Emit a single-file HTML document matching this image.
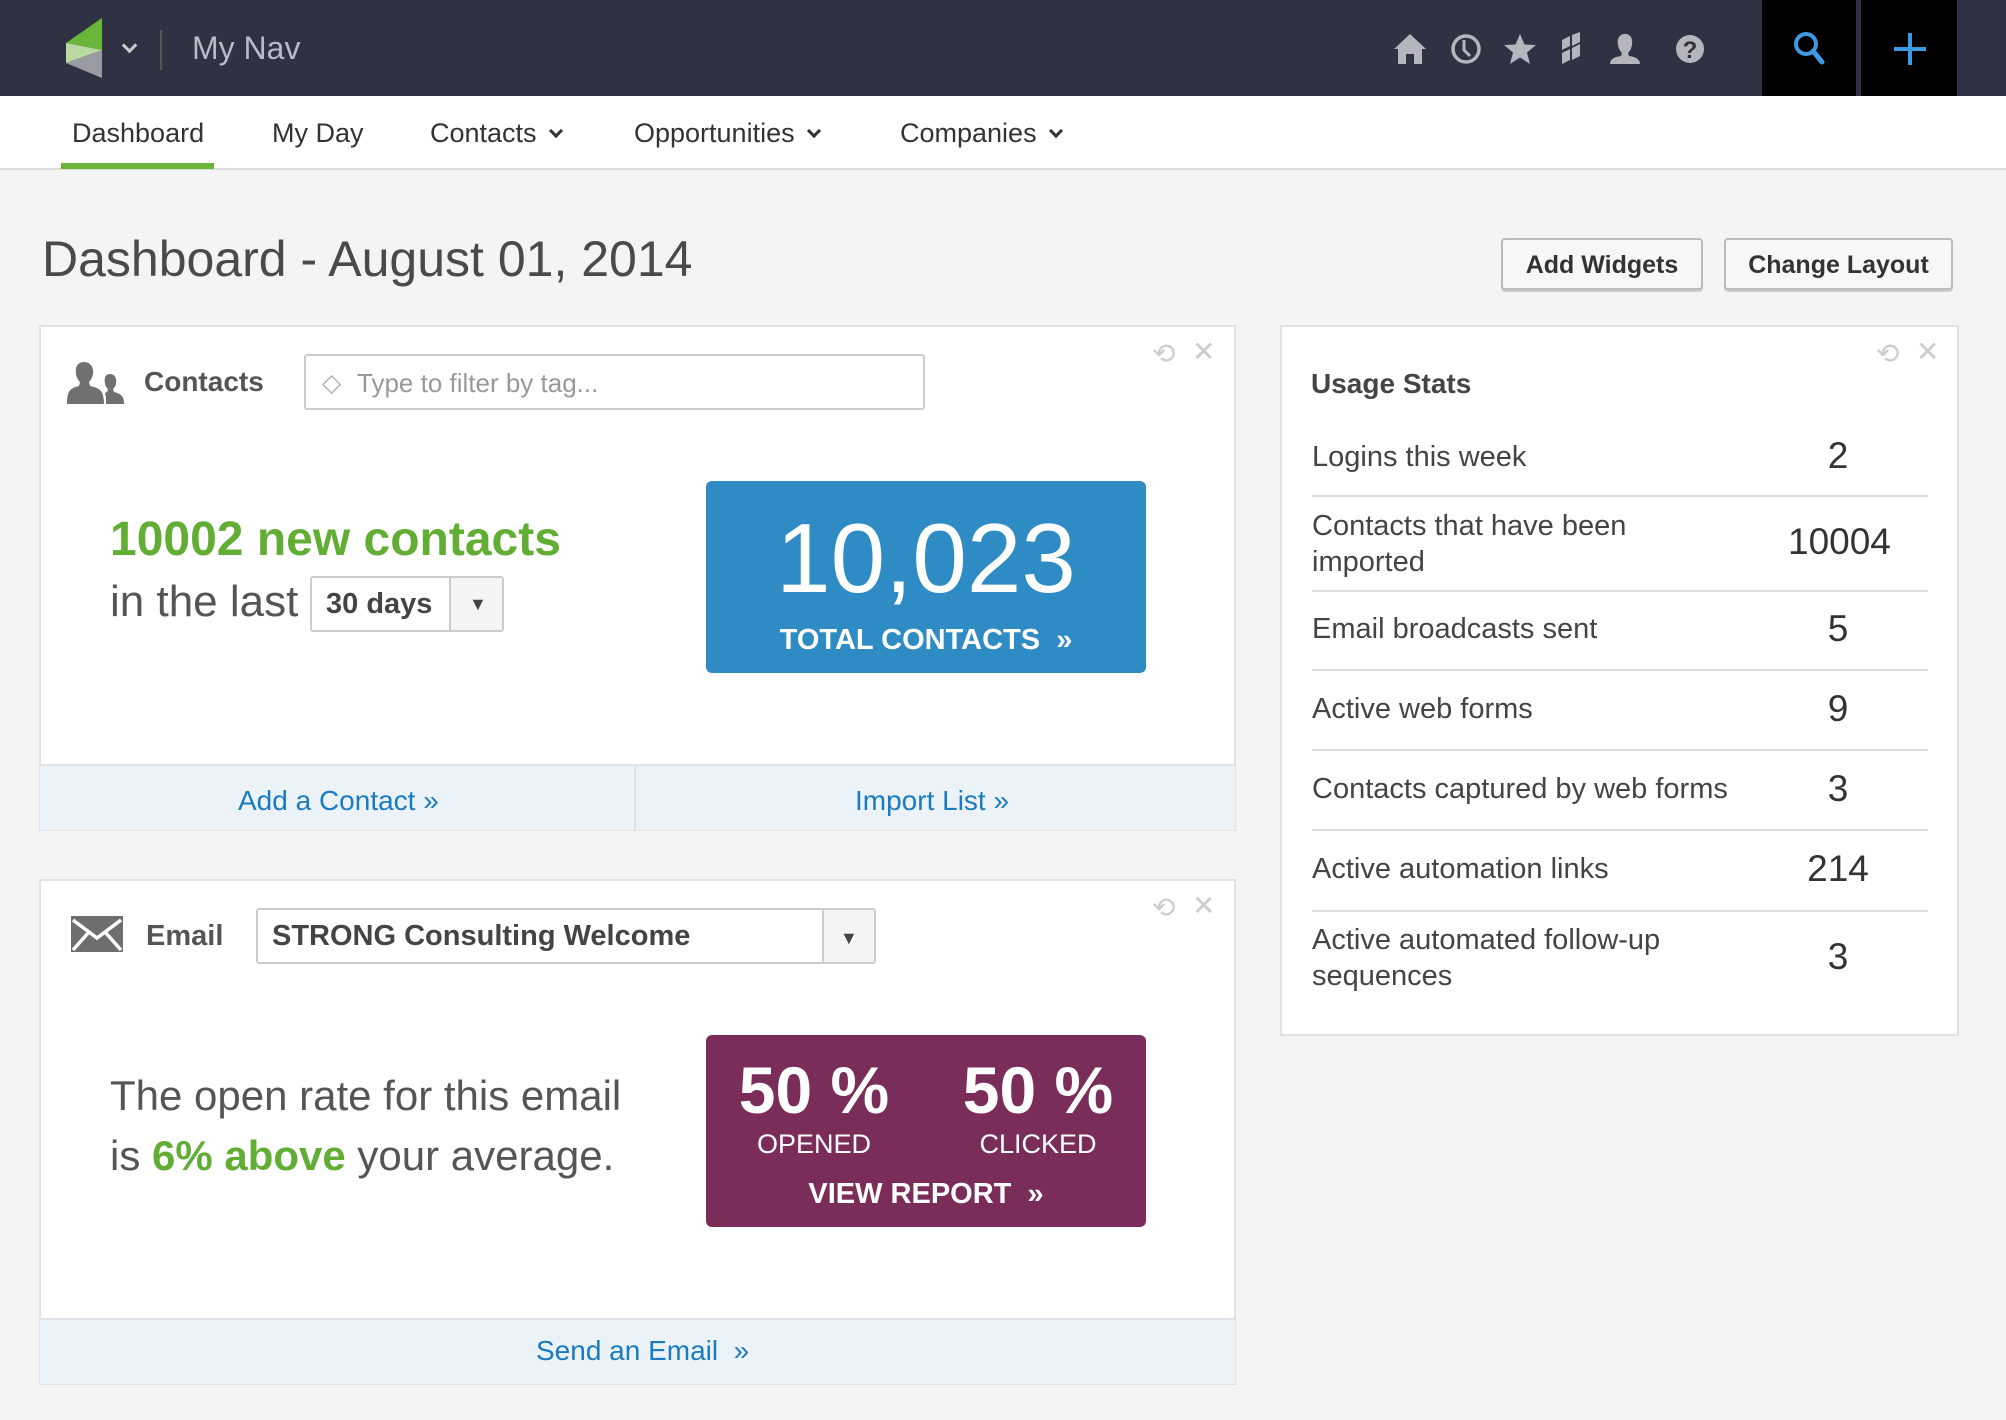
<!DOCTYPE html>
<html><head><meta charset="utf-8"><style>
*{margin:0;padding:0;box-sizing:border-box}
body{width:2006px;height:1420px;background:#f4f4f4;font-family:"Liberation Sans",sans-serif;color:#444;position:relative;overflow:hidden}
.a{position:absolute}
.top{left:0;top:0;width:2006px;height:96px;background:#2f3242}
.nav{left:0;top:96px;width:2006px;height:74px;background:#fff;border-bottom:2px solid #ddd}
.nv{top:116px;font-size:27px;color:#333;white-space:nowrap}
.chev{display:inline-block;width:10px;height:10px;border-right:3px solid #333;border-bottom:3px solid #333;transform:rotate(45deg);margin-left:14px;position:relative;top:-6px}
.panel{background:#fff;border:2px solid #e2e2e2}
.foot{background:#ebf2f8;border-top:2px solid #dde3e8}
.lnk{color:#1a7bc0;font-size:28px;white-space:nowrap}
.btn{background:#f7f7f7;border:2px solid #bbb;border-radius:4px;font-weight:bold;font-size:25px;color:#333;text-align:center;line-height:50px;box-shadow:0 2px 0 #ccc}
.row{left:1312px;width:616px;border-bottom:2px solid #ddd}
.lbl{font-size:29px;color:#444;line-height:36px;white-space:nowrap}
.val{font-size:37px;color:#333;width:100px;text-align:center;left:1788px}
.ico{color:#ccc;font-size:28px}
</style></head><body>
<div class="a top"></div>
<svg class="a" style="left:66px;top:18px" width="38" height="60" viewBox="0 0 38 60"><polygon points="0,25 36,0 36,32" fill="#6ab63a"/><polygon points="0,25 36,32 0,45" fill="#b9d9a0"/><polygon points="0,45 36,32 36,60" fill="#9a9ba2"/></svg>
<div class="a" style="left:124px;top:40px;width:11px;height:11px;border-right:3px solid #ccc;border-bottom:3px solid #ccc;transform:rotate(45deg)"></div>
<div class="a" style="left:160px;top:30px;width:2px;height:40px;background:#555"></div>
<div class="a" style="left:192px;top:30px;font-size:32px;color:#b8bac4">My Nav</div>
<svg class="a" style="left:1392px;top:32px" width="320" height="34" viewBox="0 0 320 34" fill="#b5b6bd">
<path d="M2 17 L18 2 L34 17 L30 17 L30 32 L22 32 L22 22 L14 22 L14 32 L6 32 L6 17Z"/>
<circle cx="74" cy="17" r="13" fill="none" stroke="#b5b6bd" stroke-width="3.5"/><path d="M72 8 L72 18 L78 24" fill="none" stroke="#b5b6bd" stroke-width="3"/>
<polygon points="128,2 132.5,12.5 144,13 135,20.5 138,32 128,25.5 118,32 121,20.5 112,13 123.5,12.5"/>
<path d="M170 8 L178 4 L178 14 L170 18Z M180 3 L188 0 L188 10 L180 14Z M170 21 L178 17 L178 28 L170 32Z M180 16 L188 12 L188 24 L180 28Z"/>
<path d="M233 2 C227 2 225 7 226 13 C227 18 229 20 230 21 L229 24 C221 25 218 28 218 32 L248 32 C248 28 245 25 237 24 L236 21 C237 20 239 18 240 13 C241 7 239 2 233 2Z"/>
<circle cx="298" cy="17" r="14"/><text x="298" y="26" font-size="24" font-weight="bold" text-anchor="middle" fill="#2f3242" font-family="Liberation Sans">?</text>
</svg>
<div class="a" style="left:1762px;top:0;width:94px;height:96px;background:#000"></div>
<div class="a" style="left:1861px;top:0;width:96px;height:96px;background:#000"></div>
<svg class="a" style="left:1792px;top:30px" width="34" height="36"><circle cx="14" cy="14" r="10" fill="none" stroke="#3d9ae0" stroke-width="4"/><line x1="21" y1="21" x2="30" y2="32" stroke="#3d9ae0" stroke-width="5" stroke-linecap="round"/></svg>
<svg class="a" style="left:1893px;top:32px" width="34" height="34"><rect x="15" y="1" width="4" height="32" fill="#3d9ae0"/><rect x="1" y="15" width="32" height="4" fill="#3d9ae0"/></svg>
<div class="a nav"></div>
<div class="a nv" style="left:72px;top:118px">Dashboard</div>
<div class="a" style="left:61px;top:163px;width:153px;height:6px;background:#6ab63a"></div>
<div class="a nv" style="left:272px;top:118px">My Day</div>
<div class="a nv" style="left:430px;top:118px">Contacts<span class="chev"></span></div>
<div class="a nv" style="left:634px;top:118px">Opportunities<span class="chev"></span></div>
<div class="a nv" style="left:900px;top:118px">Companies<span class="chev"></span></div>
<div class="a" style="left:42px;top:230px;font-size:50px;color:#4a4a4a;white-space:nowrap">Dashboard - August 01, 2014</div>
<div class="a btn" style="left:1501px;top:238px;width:202px;height:52px">Add Widgets</div>
<div class="a btn" style="left:1724px;top:238px;width:229px;height:52px">Change Layout</div>

<!-- contacts panel -->
<div class="a panel" style="left:39px;top:325px;width:1197px;height:506px"></div>
<div class="a foot" style="left:40px;top:764px;width:1195px;height:66px"></div>
<div class="a" style="left:634px;top:766px;width:2px;height:64px;background:#dde3e8"></div>
<svg class="a" style="left:66px;top:360px" width="60" height="44" fill="#707070"><path d="M18 2 C11 2 9 8 10 14 C11 19 13 21 14 22 L13 26 C4 28 1 31 1 44 L38 44 C38 31 34 28 24 26 L23 22 C24 21 26 19 27 14 C28 8 25 2 18 2Z"/><path d="M44 14 C39 14 38 19 39 23 C39 26 41 28 42 29 L41 32 C38 33 39 35 40 36 L40 44 L58 44 C58 37 56 34 48 32 L47 29 C48 28 50 26 50 23 C51 19 49 14 44 14Z"/></svg>
<div class="a" style="left:144px;top:366px;font-size:28px;font-weight:bold;color:#555">Contacts</div>
<div class="a" style="left:304px;top:354px;width:621px;height:56px;border:2px solid #ccc;border-radius:3px;background:#fff"></div>
<div class="a" style="left:322px;top:368px;font-size:25px;color:#aaa">◇</div>
<div class="a" style="left:357px;top:368px;font-size:26px;color:#999">Type to filter by tag...</div>
<div class="a ico" style="left:1152px;top:337px">⟲</div><div class="a ico" style="left:1192px;top:335px">✕</div>
<div class="a" style="left:110px;top:512px;font-size:48px;font-weight:bold;color:#62ae35;white-space:nowrap">10002 new contacts</div>
<div class="a" style="left:110px;top:577px;font-size:44px;color:#555">in the last</div>
<div class="a" style="left:310px;top:576px;width:194px;height:56px;border:2px solid #ccc;border-radius:3px;background:#fff"></div>
<div class="a" style="left:449px;top:578px;width:53px;height:52px;background:#f4f4f4;border-left:2px solid #ccc"></div>
<div class="a" style="left:326px;top:588px;font-size:29px;font-weight:bold;color:#444">30 days</div>
<div class="a" style="left:469px;top:594px;font-size:18px;color:#444">▼</div>
<div class="a" style="left:706px;top:481px;width:440px;height:192px;background:#2e8bc4;border-radius:6px"></div>
<div class="a" style="left:706px;top:498px;width:440px;text-align:center;font-size:98px;color:#fff;line-height:120px">10,023</div>
<div class="a" style="left:706px;top:624px;width:440px;text-align:center;font-size:29px;font-weight:bold;color:#fff">TOTAL CONTACTS &nbsp;»</div>
<div class="a lnk" style="left:238px;top:785px">Add a Contact »</div>
<div class="a lnk" style="left:855px;top:785px">Import List »</div>

<!-- email panel -->
<div class="a panel" style="left:39px;top:879px;width:1197px;height:506px"></div>
<div class="a foot" style="left:40px;top:1318px;width:1195px;height:66px"></div>
<svg class="a" style="left:71px;top:916px" width="52" height="36"><rect width="52" height="36" fill="#6e6e6e"/><path d="M2 4 L26 22 L50 4 M2 34 L18 16 M50 34 L34 16" stroke="#fff" stroke-width="3.5" fill="none"/></svg>
<div class="a" style="left:146px;top:920px;font-size:29px;font-weight:bold;color:#555">Email</div>
<div class="a" style="left:256px;top:908px;width:620px;height:56px;border:2px solid #ccc;border-radius:3px;background:#fff"></div>
<div class="a" style="left:822px;top:910px;width:52px;height:52px;background:#f4f4f4;border-left:2px solid #ccc"></div>
<div class="a" style="left:272px;top:920px;font-size:29px;font-weight:bold;color:#444">STRONG Consulting Welcome</div>
<div class="a" style="left:840px;top:928px;font-size:18px;color:#444">▼</div>
<div class="a ico" style="left:1152px;top:891px">⟲</div><div class="a ico" style="left:1192px;top:889px">✕</div>
<div class="a" style="left:110px;top:1066px;font-size:42px;color:#555;line-height:60px;white-space:nowrap">The open rate for this email<br>is <b style="color:#62ae35">6% above</b> your average.</div>
<div class="a" style="left:706px;top:1035px;width:440px;height:192px;background:#7b2d5a;border-radius:6px"></div>
<div class="a" style="left:724px;top:1052px;width:180px;text-align:center;font-size:66px;font-weight:bold;color:#fff">50 %</div>
<div class="a" style="left:724px;top:1129px;width:180px;text-align:center;font-size:27px;color:#fff">OPENED</div>
<div class="a" style="left:948px;top:1052px;width:180px;text-align:center;font-size:66px;font-weight:bold;color:#fff">50 %</div>
<div class="a" style="left:948px;top:1129px;width:180px;text-align:center;font-size:27px;color:#fff">CLICKED</div>
<div class="a" style="left:706px;top:1178px;width:440px;text-align:center;font-size:29px;font-weight:bold;color:#fff">VIEW REPORT &nbsp;»</div>
<div class="a lnk" style="left:536px;top:1335px">Send an Email &nbsp;»</div>

<!-- usage stats -->
<div class="a panel" style="left:1280px;top:325px;width:679px;height:711px"></div>
<div class="a ico" style="left:1876px;top:337px">⟲</div><div class="a ico" style="left:1916px;top:335px">✕</div>
<div class="a" style="left:1311px;top:368px;font-size:28px;font-weight:bold;color:#444">Usage Stats</div>
<div class="a row" style="top:424px;height:73px"></div>
<div class="a row" style="top:497px;height:95px"></div>
<div class="a row" style="top:592px;height:79px"></div>
<div class="a row" style="top:671px;height:80px"></div>
<div class="a row" style="top:751px;height:80px"></div>
<div class="a lbl" style="left:1312px;top:439px">Logins this week</div><div class="a val" style="top:435px">2</div>
<div class="a lbl" style="left:1312px;top:508px">Contacts that have been<br>imported</div><div class="a val" style="top:521px;left:1788px">10004</div>
<div class="a lbl" style="left:1312px;top:611px">Email broadcasts sent</div><div class="a val" style="top:608px">5</div>
<div class="a lbl" style="left:1312px;top:691px">Active web forms</div><div class="a val" style="top:688px">9</div>
<div class="a lbl" style="left:1312px;top:771px">Contacts captured by web forms</div><div class="a val" style="top:768px">3</div>
<div class="a lbl" style="left:1312px;top:851px">Active automation links</div><div class="a val" style="top:848px">214</div>
<div class="a lbl" style="left:1312px;top:922px">Active automated follow-up<br>sequences</div><div class="a val" style="top:936px">3</div>
<div class="a" style="left:1312px;top:910px;width:616px;height:2px;background:#ddd"></div>
</body></html>
